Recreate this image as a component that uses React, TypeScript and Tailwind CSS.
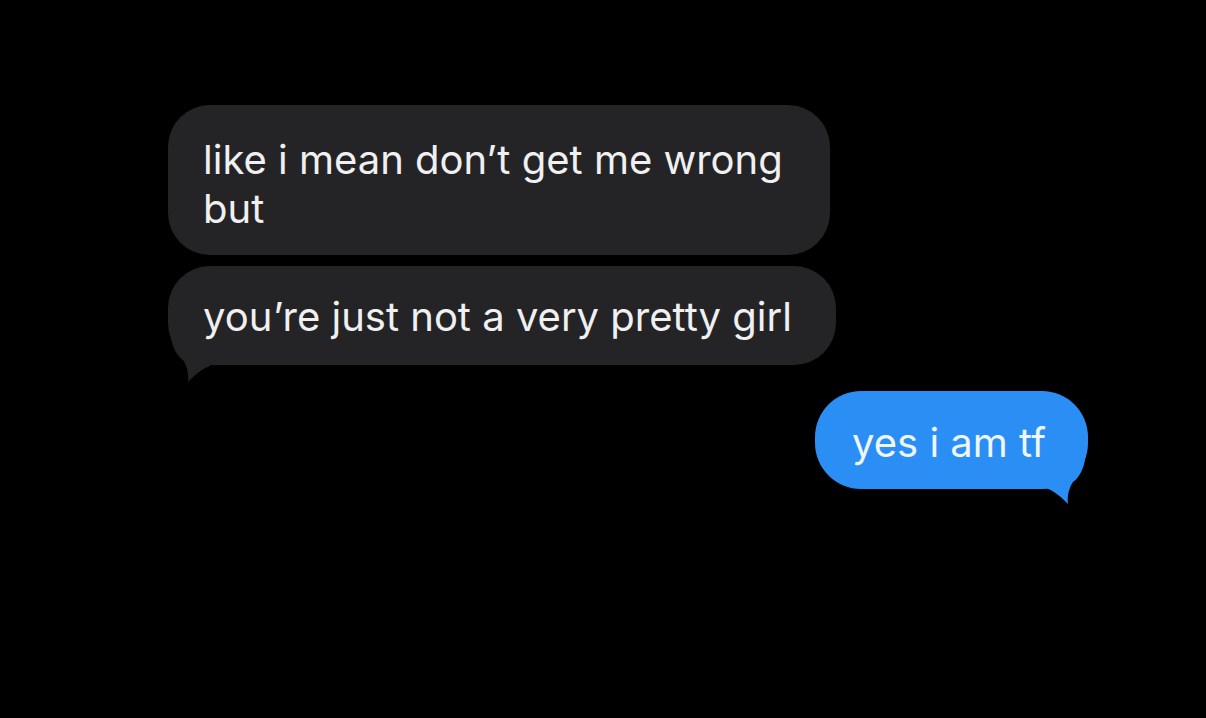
import type { ReactNode } from "react";

// small curled tail on the bottom corner of a chat bubble
function Tail({ color, flip }: { color: string; flip?: boolean }) {
  return (
    <svg
      viewBox="0 0 60 70"
      className={
        flip
          ? "absolute right-0 bottom-[-16px] h-[70px] w-[60px] -scale-x-100"
          : "absolute left-0 bottom-[-18px] h-[70px] w-[60px]"
      }
    >
      <path
        d="M2 0 V17 C3 32 8 42 15 47 C19 53 21 61 20 69 C26 63 32 57 42 53 L42 0 Z"
        fill={color}
      />
    </svg>
  );
}

function Bubble({
  children,
  className,
  tail,
  mine,
}: {
  children: ReactNode;
  className: string;
  tail?: boolean;
  mine?: boolean;
}) {
  return (
    <div className={"relative " + className}>
      {tail && <Tail color={mine ? "#2a8ef4" : "#242427"} flip={mine} />}
      <div
        className={
          mine
            ? "relative rounded-[46px] bg-[#2a8ef4] text-[#eef6ff]"
            : "relative rounded-[42px] bg-[#242427] text-[#f0f0f0]"
        }
      >
        {children}
      </div>
    </div>
  );
}

export default function App() {
  return (
    <div
      className="h-[718px] w-full overflow-hidden bg-black"
      style={{ fontFamily: "Inter, 'Liberation Sans', sans-serif" }}
    >
      <div className="flex flex-col pt-[105px]">
        {/* incoming */}
        <div className="flex flex-col gap-[11px] pl-[168px]">
          <Bubble className="w-[662px]">
            <p className="pl-[35px] pr-[20px] pt-[30px] pb-[22px] text-[40px] leading-[49px]">
              like i mean don’t get me wrong but
            </p>
          </Bubble>
          <Bubble className="w-[668px]" tail>
            <p className="pl-[35px] pr-[20px] pt-[26px] pb-[24px] text-[40px] leading-[49px]">
              you’re just not a very pretty girl
            </p>
          </Bubble>
        </div>

        {/* outgoing */}
        <div className="mt-[26px] flex justify-end pr-[118px]">
          <Bubble className="w-[273px]" tail mine>
            <p className="pl-[37px] pr-[20px] pt-[27px] pb-[22px] text-[40px] leading-[49px]">
              yes i am tf
            </p>
          </Bubble>
        </div>
      </div>
    </div>
  );
}
